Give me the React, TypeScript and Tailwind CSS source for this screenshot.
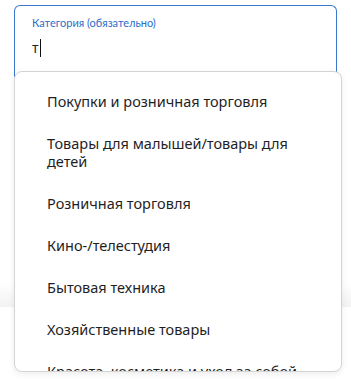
import { useState } from "react";

const CATEGORIES = [
  "Покупки и розничная торговля",
  "Товары для малышей/товары для детей",
  "Розничная торговля",
  "Кино-/телестудия",
  "Бытовая техника",
  "Хозяйственные товары",
  "Красота, косметика и уход за собой",
];

export default function App() {
  const [query, setQuery] = useState("т");

  return (
    <div
      className="relative h-[381px] w-[351px] overflow-hidden bg-white"
      style={{ fontFamily: '"Noto Sans", "Open Sans", sans-serif' }}
    >
      {/* Field */}
      <div className="px-[14px] pt-[5px]">
        <div className="h-[72px] rounded-t-[6px] border border-b-0 border-[#3a78cc] px-[17px] pt-[9px]">
          <label
            className="block text-[11px] leading-[16px] text-[#2c6ec6]"
            style={{ fontFamily: 'Lato, "Noto Sans", sans-serif' }}
          >
            Категория (обязательно)
          </label>
          <div className="mt-[7px] flex items-center">
            <input
              value={query}
              onChange={(e) => setQuery(e.target.value)}
              className="w-[8px] bg-transparent text-[14px] leading-[20px] text-[#222] outline-none"
            />
            <span className="h-[18px] w-px bg-[#111]" />
          </div>
        </div>
      </div>

      {/* Page content underneath */}
      <div className="mt-[206px] h-[24px] bg-gradient-to-b from-white to-[#f2f2f2]" />

      {/* Suggestions */}
      <div className="absolute left-[14px] top-[71px] h-[301px] w-[328px] overflow-hidden rounded-[8px] border border-[#d4d4d4] bg-white py-2 shadow-[0_2px_6px_rgba(0,0,0,0.08)]">
        {CATEGORIES.map((c) => (
          <div
            key={c}
            className="px-[32px] py-3 text-[14.5px] leading-[18px] text-[#1f1f1f]"
          >
            {c}
          </div>
        ))}
      </div>
    </div>
  );
}
